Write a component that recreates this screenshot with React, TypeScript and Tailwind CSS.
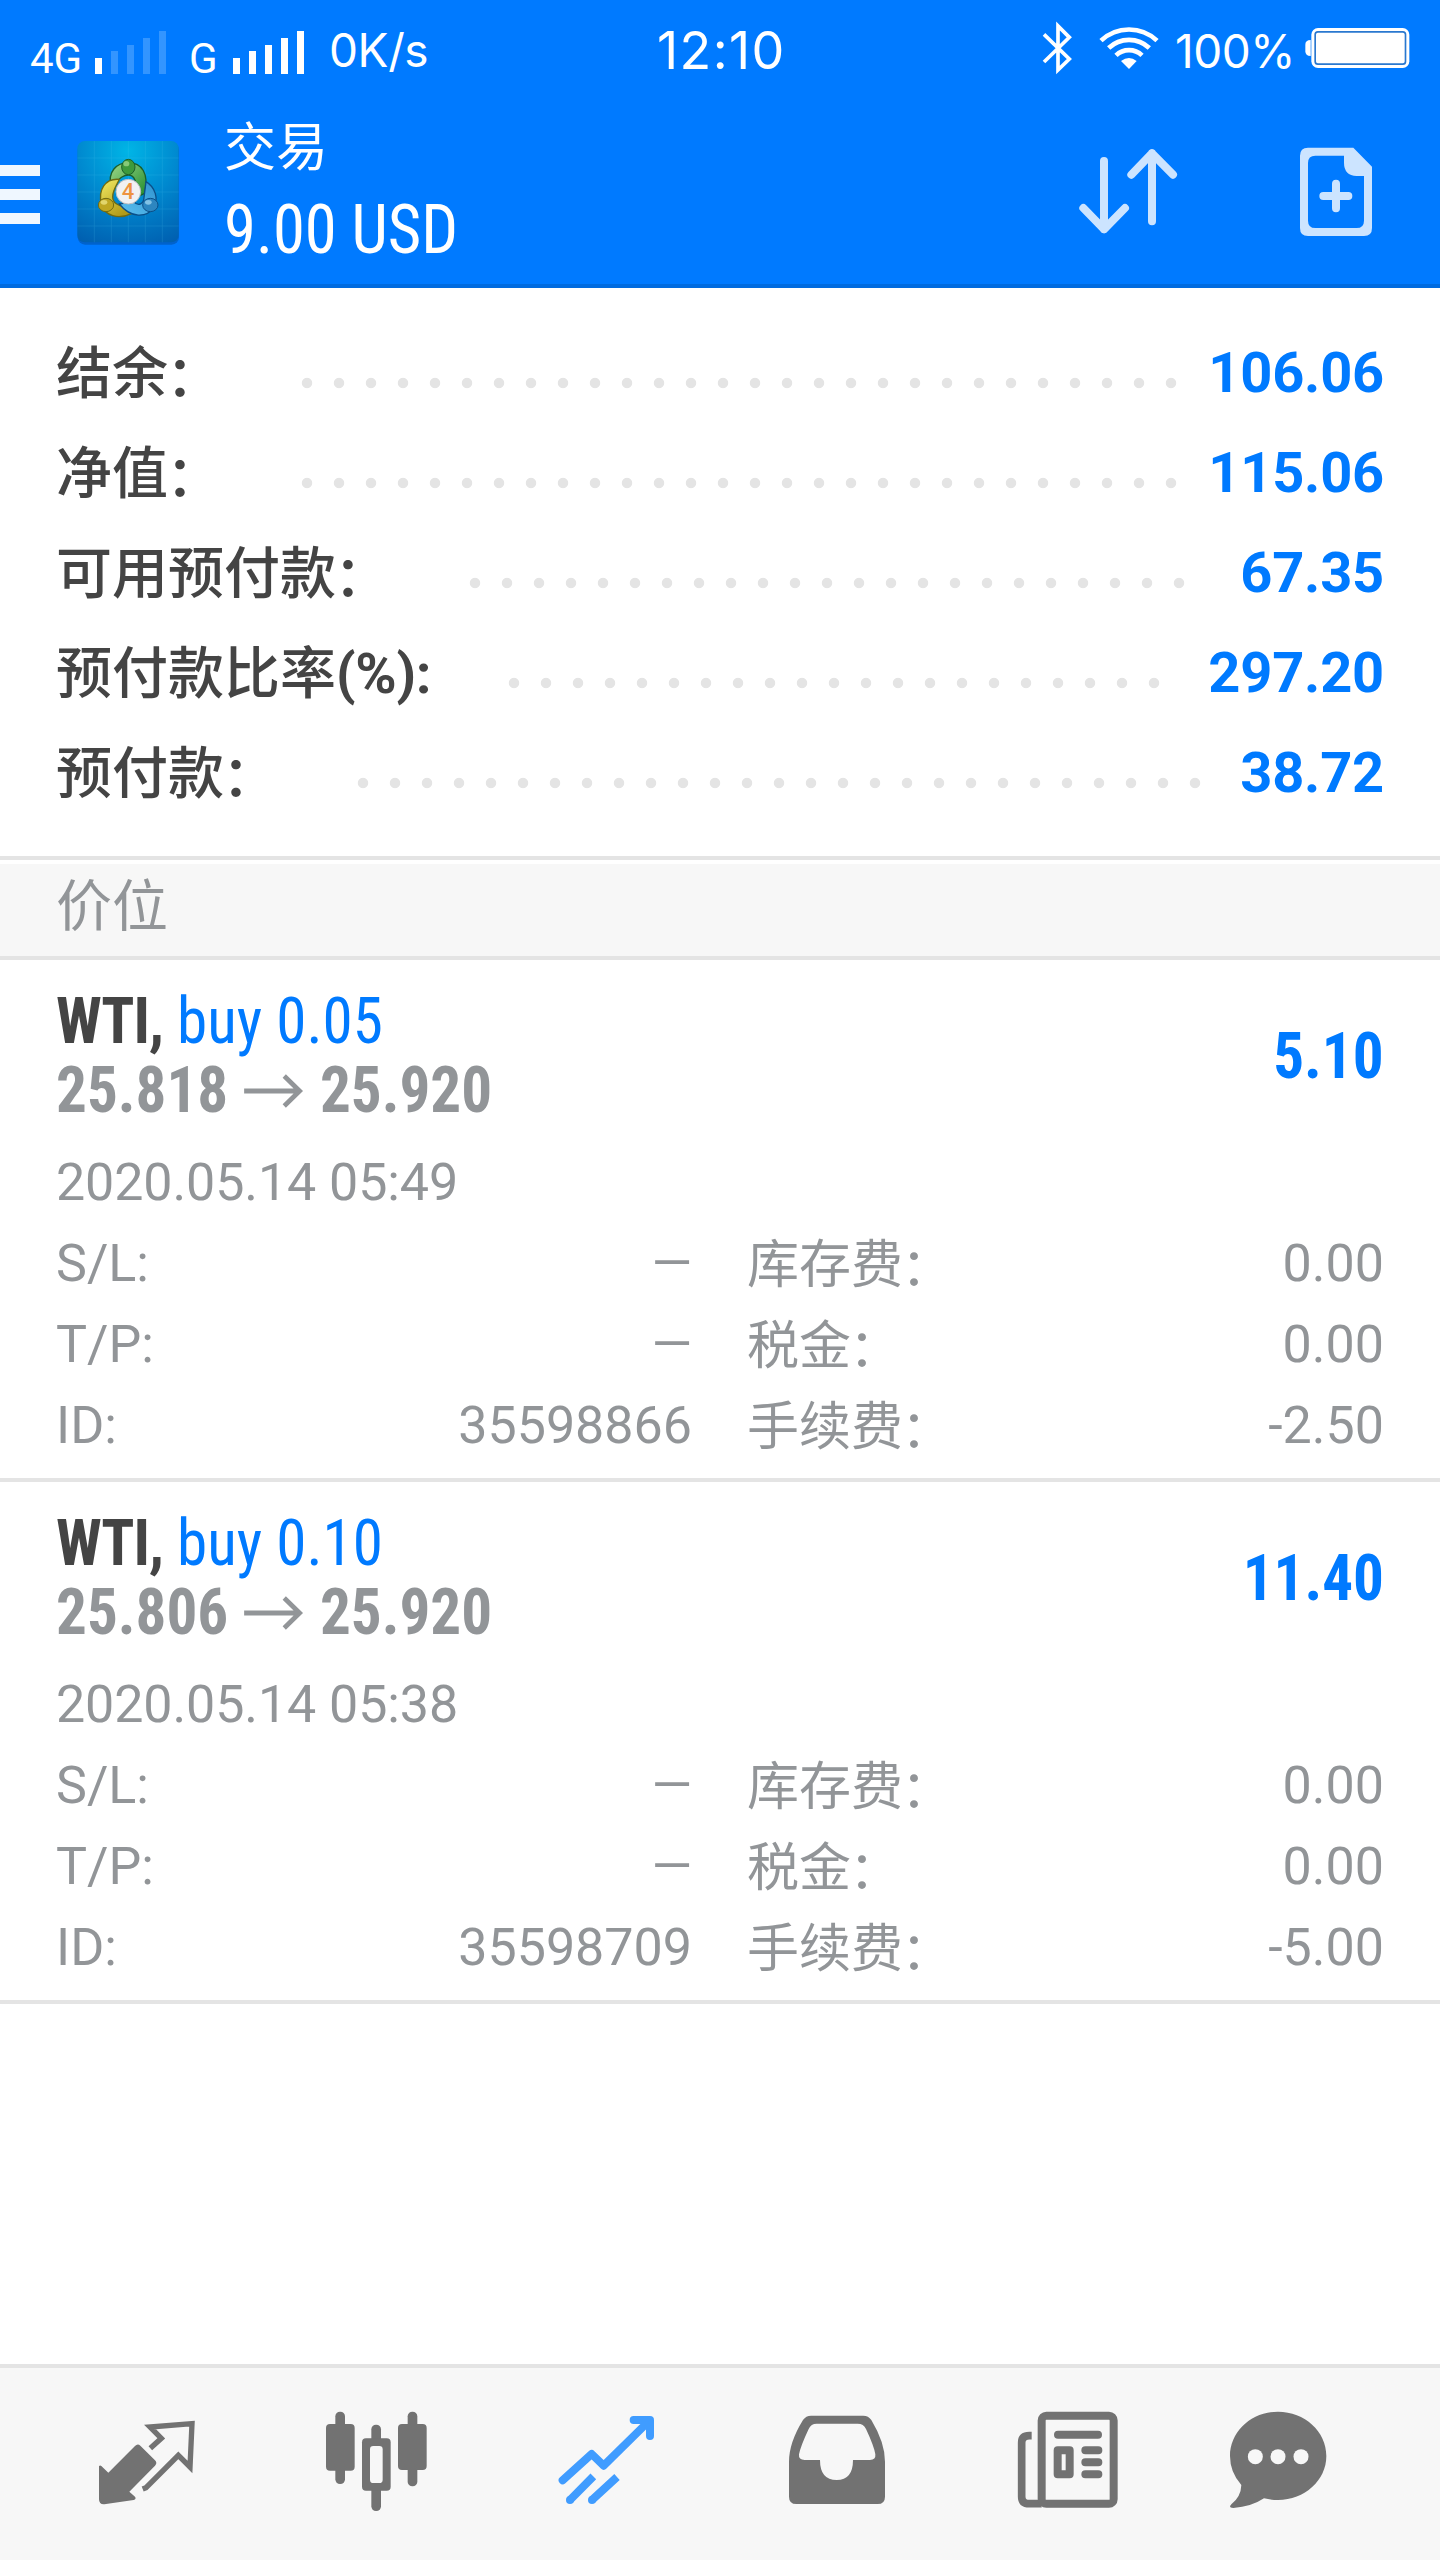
import type { ReactNode } from 'react';

const summary = [
  { label: '结余：', value: '106.06', dots: 28 },
  { label: '净值：', value: '115.06', dots: 28 },
  { label: '可用预付款：', value: '67.35', dots: 23 },
  { label: '预付款比率', suffix: '(%):', value: '297.20', dots: 21 },
  { label: '预付款：', value: '38.72', dots: 27 },
];

interface Position {
  id: string;
  symbol: string;
  side: string;
  open: string;
  current: string;
  time: string;
  profit: string;
  swap: string;
  tax: string;
  fee: string;
}

const positions: Position[] = [
  {
    id: '35598866',
    symbol: 'WTI,',
    side: 'buy 0.05',
    open: '25.818',
    current: '25.920',
    time: '2020.05.14 05:49',
    profit: '5.10',
    swap: '0.00',
    tax: '0.00',
    fee: '-2.50',
  },
  {
    id: '35598709',
    symbol: 'WTI,',
    side: 'buy 0.10',
    open: '25.806',
    current: '25.920',
    time: '2020.05.14 05:38',
    profit: '11.40',
    swap: '0.00',
    tax: '0.00',
    fee: '-5.00',
  },
];

export default function App() {
  return (
    <div className="w-[1440px] h-[2560px] flex flex-col overflow-hidden bg-white text-[#929598] font-[Roboto,'Noto_Sans_CJK_SC',sans-serif]">
      <header className="h-[288px] shrink-0 bg-[#007aff] border-b-4 border-[#006bdf] text-white">
        <StatusBar />
        <AppBar />
      </header>

      {/* Account summary */}
      <section className="h-[572px] shrink-0 pt-[35px] px-14 border-b-4 border-[#e4e4e4]">
        {summary.map((row) => (
          <div key={row.label} className="h-[100px] flex text-[56px] leading-[100px] font-medium whitespace-nowrap">
            <span className="text-[#444444] pt-px">
              <Label text={row.label} />
              {row.suffix && <span className="font-bold tracking-[-0.3px]">{row.suffix}</span>}
            </span>
            <span
              className="ml-[67px] mt-[44px] h-8 bg-[radial-gradient(circle,#e4e4e4_4.8px,transparent_5.6px)] bg-[length:32px_32px]"
              style={{ width: row.dots * 32 }}
            />
            <span className="ml-auto text-[#007aff] font-bold tracking-[-0.2px]">{row.value}</span>
          </div>
        ))}
      </section>

      <h2 className="mt-1 h-24 shrink-0 px-14 bg-[#f7f7f7] border-b-4 border-[#e4e4e4] text-[56px] leading-[86px]">
        价位
      </h2>

      <main className="flex-1">
        {positions.map((position) => (
          <PositionItem key={position.id} position={position} />
        ))}
      </main>

      <TabBar />
    </div>
  );
}

// The full-width colon sits a little low and to the left of its cell
function Label({ text }: { text: string }) {
  if (!text.endsWith('：')) return <>{text}</>;
  return (
    <>
      {text.slice(0, -1)}
      <span className="relative top-[3px] -left-[2px]">：</span>
    </>
  );
}

function SignalBars({ level }: { level: number }) {
  const heights = [16, 23, 29, 36, 43];
  return (
    <div className="flex items-end gap-[9px] h-[43px]">
      {heights.map((height, index) => (
        <div
          key={height}
          className={index < level ? 'w-[7px] bg-white' : 'w-[7px] bg-[#3395ff]'}
          style={{ height }}
        />
      ))}
    </div>
  );
}

function StatusBar() {
  return (
    <div className="h-[104px] flex items-start whitespace-nowrap font-[Inter,sans-serif]">
      <span className="ml-[30px] mt-[35px] w-[65px] text-[42px] leading-[48px] font-[Roboto,sans-serif]">4G</span>
      <div className="mt-[31px] w-[94px]">
        <SignalBars level={1} />
      </div>
      <span className="mt-[35px] w-[44px] text-[42px] leading-[48px] font-[Roboto,sans-serif]">G</span>
      <div className="mt-[31px] w-[96px]">
        <SignalBars level={5} />
      </div>
      <span className="mt-[24px] w-[328px] text-[46px] leading-[52px] tracking-[-0.4px]">0K/s</span>
      <span className="mt-[21px] w-[381px] text-[52px] leading-[60px] tracking-[1.4px]">12:10</span>
      <svg className="mt-[20px] w-[138px] h-[56px]" viewBox="234 60 414 168" fill="none">
        {/* Bluetooth */}
        <path d="M252 103L328 177L294 210V78L328 112L252 186" stroke="#fff" strokeWidth="11" />
        {/* Wi-Fi */}
        <g stroke="#fff" strokeWidth="14">
          <path d="M423 122A122 122 0 0 1 591 122" />
          <path d="M446 144A88 88 0 0 1 568 144" />
          <path d="M468 166A56 56 0 0 1 546 166" />
        </g>
        <path d="M483 183Q507 165 530 183L507 207Z" fill="#fff" />
      </svg>
      <span className="-ml-px mt-[25px] w-[130px] text-[46px] leading-[52px] tracking-[-0.5px]">100%</span>
      <svg className="mt-[24px] -ml-px w-[108px] h-[48px]" viewBox="1034 72 324 144">
        <path d="M1054 120Q1038 120 1038 134V154Q1038 168 1054 168Z" fill="#fff" />
        <rect x="1056" y="84" width="294" height="120" rx="20" fill="#fff" />
        <rect x="1067.500" y="95.500" width="271" height="97" rx="8" fill="none" stroke="#2a78cf" strokeWidth="5" />
      </svg>
    </div>
  );
}

function AppBar() {
  return (
    <div className="h-[180px] flex items-start">
      <div className="mt-[61px] w-10 flex flex-col gap-[13px]">
        <div className="h-[11px] bg-[#eff7ff]" />
        <div className="h-[11px] bg-[#eff7ff]" />
        <div className="h-[11px] bg-[#eff7ff]" />
      </div>
      <AppLogo />
      <div className="ml-[39px] w-[600px] whitespace-nowrap">
        <div className="mt-[15px] text-[52px] leading-[60px]">交易</div>
        <div className="mt-[11px] text-[68px] leading-[80px] font-[450] font-stretch-condensed origin-left scale-x-[0.95]">
          9.00 USD
        </div>
      </div>
      <svg className="ml-[250px] mt-[36px] w-[114px] h-[104px]" viewBox="342 420 342 312" fill="none" stroke="#cce4ff" strokeWidth="24" strokeLinecap="round" strokeLinejoin="round">
        <path d="M432 483V688M370 624L432 688L495 624" />
        <path d="M576 664V460M514 524L576 460L639 524" />
      </svg>
      <svg className="ml-[100px] mt-[36px] w-[96px] h-[104px]" viewBox="984 420 288 312">
        <path fillRule="evenodd" fill="#cce4ff" d="M1044 443H1180L1236 500V684Q1236 708 1212 708H1044Q1020 708 1020 684V467Q1020 443 1044 443ZM1066 467Q1044 467 1044 489V662Q1044 684 1066 684H1190Q1212 684 1212 662V528H1190Q1152 526 1152 488V467Z" />
        <path d="M1090 588H1165M1128 551V625" stroke="#cce4ff" strokeWidth="24" strokeLinecap="round" />
      </svg>
    </div>
  );
}

function AppLogo() {
  return (
    <svg className="ml-[31px] mt-[31px] w-[114px] h-[114px]" viewBox="213 405 342 342">
      <defs>
        <radialGradient id="logoBg" cx="0.5" cy="0.1" r="1">
          <stop offset="0" stopColor="#00b5e6" />
          <stop offset="0.5" stopColor="#0088cf" />
          <stop offset="1" stopColor="#005fb0" />
        </radialGradient>
        <linearGradient id="logoGreen" x1="0" y1="0" x2="1" y2="1">
          <stop offset="0" stopColor="#9fd98a" />
          <stop offset="1" stopColor="#1f8a2c" />
        </linearGradient>
        <linearGradient id="logoYellow" x1="0" y1="0" x2="0.6" y2="1">
          <stop offset="0" stopColor="#f3ec63" />
          <stop offset="1" stopColor="#b09a18" />
        </linearGradient>
        <linearGradient id="logoBlue" x1="1" y1="0" x2="0" y2="1">
          <stop offset="0" stopColor="#2f93cf" />
          <stop offset="1" stopColor="#5cc0f0" />
        </linearGradient>
      </defs>
      <rect x="233" y="428" width="304" height="306" rx="22" fill="#0059b8" opacity="0.7" />
      <rect x="232" y="423" width="304" height="304" rx="22" fill="url(#logoBg)" />
      <path d="M283 423V727M334 423V727M385 423V727M436 423V727M487 423V727M232 474H536M232 525H536M232 576H536M232 627H536M232 678H536" stroke="#5fd0f5" strokeWidth="2" opacity="0.22" />
      <path d="M333 560C322 515 350 488 385 488C425 488 448 520 434 580L410 592C414 550 404 525 385 525C366 525 356 540 333 560Z" fill="url(#logoGreen)" stroke="#1c5f2a" strokeWidth="4" />
      <path d="M358 538C315 534 294 570 304 612C314 648 355 660 396 640L384 618C352 622 338 606 338 590C338 572 348 560 358 538Z" fill="url(#logoYellow)" stroke="#6f6a12" strokeWidth="4" />
      <path d="M438 545C466 562 476 596 462 622C440 654 392 655 358 612L400 604C416 622 432 610 432 592Z" fill="url(#logoBlue)" stroke="#0b4f88" strokeWidth="4" />
      <ellipse cx="385" cy="501" rx="20" ry="23" fill="#3d9a3c" stroke="#1c5f2a" strokeWidth="3" />
      <ellipse cx="379" cy="491" rx="9" ry="8" fill="#a5dd92" opacity="0.7" />
      <ellipse cx="318" cy="615" rx="23" ry="20" fill="#bfa722" stroke="#6f6a12" strokeWidth="3" />
      <ellipse cx="312" cy="607" rx="10" ry="7" fill="#f1e98c" opacity="0.7" />
      <ellipse cx="451" cy="615" rx="23" ry="20" fill="#2d86c0" stroke="#0b4f88" strokeWidth="3" />
      <ellipse cx="445" cy="607" rx="10" ry="7" fill="#a6dbf5" opacity="0.7" />
      <circle cx="385" cy="575" r="37" fill="#f1f1f3" stroke="#b9bcc0" strokeWidth="3" />
      <text x="384" y="598" textAnchor="middle" fontFamily="Roboto, sans-serif" fontSize="66" fontWeight="500" fill="#ee9340">4</text>
    </svg>
  );
}

function Detail({ label, children }: { label: string; children: ReactNode }) {
  return (
    <div className="flex justify-between even:*:first:translate-y-[2px]">
      <span>
        <Label text={label} />
      </span>
      <span>{children}</span>
    </div>
  );
}

function PositionItem({ position }: { position: Position }) {
  return (
    <article className="h-[522px] pt-[28px] px-14 border-b-4 border-[#e4e4e4] whitespace-nowrap">
      <div className="flex items-center justify-between text-[64px] leading-[68px] font-stretch-condensed">
        <div className="origin-left scale-x-[0.955]">
          <div>
            <b className="text-[#444444] tracking-[-1px]">{position.symbol}</b>{' '}
            <span className="text-[#007aff]">{position.side}</span>
          </div>
          <div className="flex font-bold translate-y-px">
            <span>{position.open}</span>
            <svg className="mx-[17px] mt-[17px] w-[62px] h-[34px]" viewBox="0 0 62 34" fill="none" stroke="currentColor" strokeWidth="5">
              <path d="M-1 17H58M42 2L58 17L42 32" />
            </svg>
            <span>{position.current}</span>
          </div>
        </div>
        <b className="mt-[2px] origin-right scale-x-[0.955] text-[#007aff]">{position.profit}</b>
      </div>

      <div className="mt-[18px] text-[52px] leading-[81px]">
        <div className="tracking-[-0.1px]">{position.time}</div>
        <div className="grid grid-cols-[636px_637px] gap-x-[55px]">
          <Detail label="S/L:">—</Detail>
          <Detail label="库存费：">{position.swap}</Detail>
          <Detail label="T/P:">—</Detail>
          <Detail label="税金：">{position.tax}</Detail>
          <Detail label="ID:">{position.id}</Detail>
          <Detail label="手续费：">{position.fee}</Detail>
        </div>
      </div>
    </article>
  );
}

function TabBar() {
  return (
    <nav className="h-[196px] shrink-0 flex pl-8 bg-[#f7f7f7] border-t-4 border-[#e4e4e4] text-[#727272]">
      {/* Quotes */}
      <svg className="w-[230px] h-[192px]" viewBox="96 84 690 576" fill="none">
        <path d="M297 378Q301 375 304 378L325 398L405 318Q413 309 421 317L465 361Q473 369 465 377L388 455L405 470Q410 477 401 480L313 493Q297 494 297 478Z" fill="currentColor" />
        <path d="M451 325L484 295L450 261L576 251L570 381L535 346L438 443L428 447" stroke="currentColor" strokeWidth="16" />
      </svg>
      {/* Charts */}
      <svg className="w-[230px] h-[192px]" viewBox="786 84 690 576" fill="currentColor">
        <rect x="1006" y="215" width="29" height="217" rx="14" />
        <rect x="978" y="252" width="86" height="140" rx="12" />
        <rect x="1223" y="215" width="29" height="224" rx="14" />
        <rect x="1194" y="252" width="86" height="138" rx="12" />
        <rect x="1114" y="254" width="29" height="259" rx="14" />
        <rect x="1086" y="295" width="86" height="157" rx="12" />
        <rect x="1110" y="318" width="38" height="111" rx="10" fill="#f7f7f7" />
      </svg>
      {/* Trade */}
      <svg className="w-[230px] h-[192px]" viewBox="36 84 690 576" fill="none" stroke="#409cff" strokeWidth="24" strokeLinejoin="round">
        <path d="M248 421L335 342L371 377L504 246M461 240H510V288" strokeLinecap="round" />
        <circle cx="270" cy="480" r="12" fill="#409cff" stroke="none" />
        <circle cx="336" cy="480" r="12" fill="#409cff" stroke="none" />
        <path d="M270 480L340 409M336 480L411 411" />
      </svg>
      {/* History */}
      <svg className="w-[230px] h-[192px]" viewBox="726 84 690 576">
        <path fillRule="evenodd" fill="currentColor" d="M993 227H1150Q1165 227 1174 240Q1215 308 1215 365V470Q1215 492 1193 492H949Q927 492 927 470V365Q927 308 969 240Q978 227 993 227ZM1010 251Q993 251 986 267Q962 318 957 343Q955 360 974 360H1020Q1020 420 1070 420Q1119 420 1119 360H1170Q1188 360 1186 343Q1182 318 1158 267Q1151 251 1133 251Z" />
      </svg>
      {/* News */}
      <svg className="w-[230px] h-[192px]" viewBox="-24 84 690 576" fill="none" stroke="currentColor">
        <path d="M215 287H208Q185 287 185 308V470Q185 491 208 491H245" strokeWidth="23" />
        <rect x="245" y="227.500" width="216" height="264" rx="14" strokeWidth="24" />
        <path d="M294 284H414M376 331H415M376 367H415M376 403H415" strokeWidth="24" strokeLinecap="round" />
        <rect x="293" y="331" width="36" height="72" strokeWidth="24" strokeLinejoin="round" />
      </svg>
      {/* Messages */}
      <svg className="w-[230px] h-[192px]" viewBox="666 84 690 576">
        <path d="M954 215C1034 215 1099 274 1099 348C1099 421 1034 480 954 480Q933 480 912 475Q875 500 820 504Q804 503 814 493Q843 470 844 435Q810 397 810 348C810 274 875 215 954 215Z" fill="currentColor" />
        <g fill="#f7f7f7">
          <circle cx="886" cy="350" r="22.500" />
          <circle cx="954" cy="350" r="22.500" />
          <circle cx="1023" cy="350" r="22.500" />
        </g>
      </svg>
    </nav>
  );
}
